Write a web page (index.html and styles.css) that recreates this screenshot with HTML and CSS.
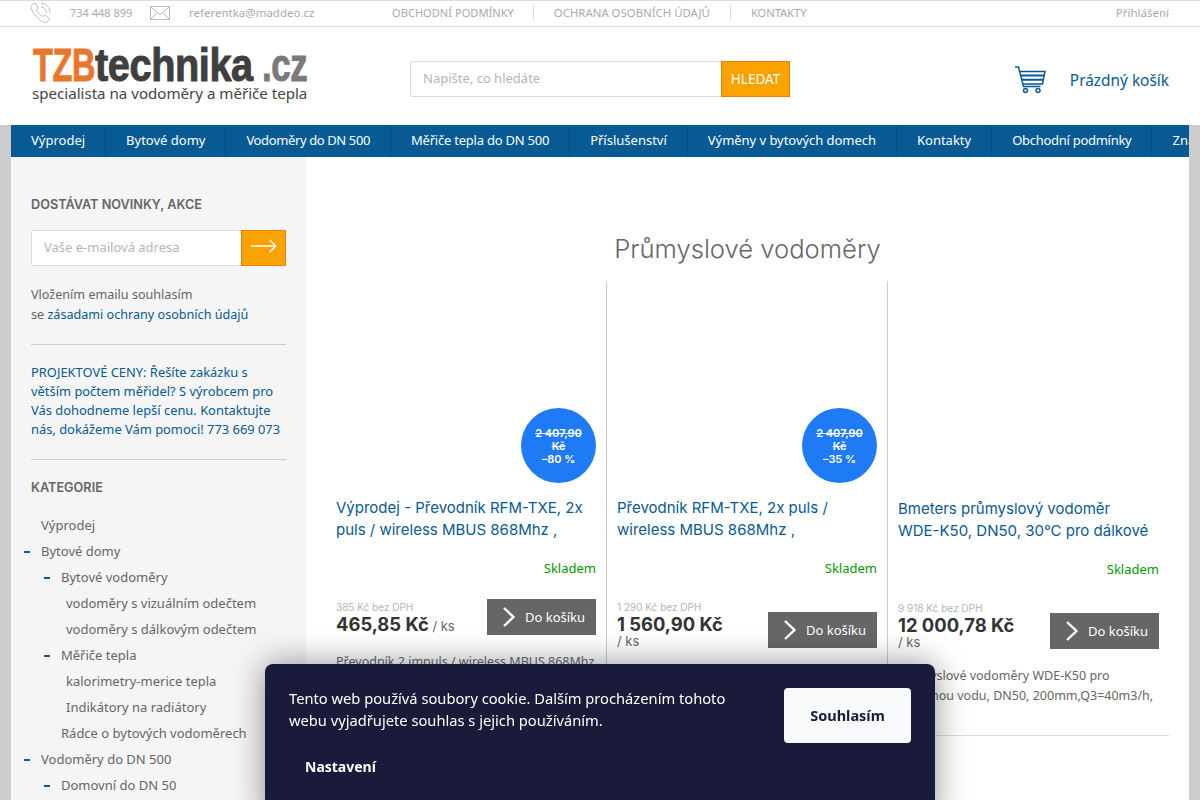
FILE: index.html
```html
<!DOCTYPE html>
<html lang="cs">
<head>
    <meta charset="UTF-8">
    <meta name="viewport" content="width=device-width, initial-scale=1.0">
    <title>TZBtechnika.cz</title>
    <link rel="stylesheet" href="styles.css">
</head>
<body>
    <!-- Top bar -->
    <div class="topbar">
        <div class="contact">
            <svg class="ico-phone" width="22" height="22" viewBox="0 0 22 22" fill="none" stroke="#bbb" stroke-width="1">
                <path d="M2.5 2.5 5 1l3.5 5-2 2c.8 2.2 3.4 5.5 6 6.7l2-1.8 5 3.6-2 3.2c-.8 1-2.4 1.300-4 .6C8 17.500 3.200 12 1.300 6.500.9 5 1.200 3.500 2.500 2.500Z"/>
                <path d="M11 1.500c5 0 9 4 9 9.500M11 5c3 0 5.500 2.500 5.500 6"/>
            </svg>
            <span class="phone-num">734 448 899</span>
            <svg class="ico-mail" width="20" height="14" viewBox="0 0 20 14" fill="none" stroke="#bbb" stroke-width="1">
                <path d="M.5.5h19v13H.5zM.5.5 10 8.500 19.500.5M.5 13.500 7.500 6.500M19.500 13.500l-7-7"/>
            </svg>
            <span class="mail-addr">referentka@maddeo.cz</span>
        </div>
        <ul class="top-links">
            <li>OBCHODNÍ PODMÍNKY</li>
            <li>OCHRANA OSOBNÍCH ÚDAJŮ</li>
            <li>KONTAKTY</li>
        </ul>
        <span class="login">Přihlášení</span>
    </div>

    <!-- Logo, search, cart -->
    <header class="header">
        <div class="logo">
            <div class="logo-mark"><span class="logo-tzb">TZB</span><span class="logo-tech">technika</span><span class="logo-cz">.cz</span></div>
            <div class="logo-sub">specialista na vodoměry a měřiče tepla</div>
        </div>
        <form class="search">
            <input type="text" placeholder="Napište, co hledáte">
            <button type="button">HLEDAT</button>
        </form>
        <div class="cart">
            <svg width="31" height="28" viewBox="0 0 31 28" fill="none" stroke="#075a94" stroke-width="1.500">
                <path d="M0 1h3.500l5 19.500h17"/>
                <path d="M5 5.500h25l-2.500 12.500H8"/>
                <path d="M6 9.500h23M7 13.800h21.500" stroke-width="2"/>
                <circle cx="10.500" cy="24.500" r="2"/>
                <circle cx="23" cy="24.500" r="2"/>
            </svg>
            <span>Prázdný košík</span>
        </div>
    </header>

    <div class="wrap">
        <nav class="nav">
            <a>Výprodej</a>
            <a>Bytové domy</a>
            <a>Vodoměry do DN 500</a>
            <a>Měřiče tepla do DN 500</a>
            <a>Příslušenství</a>
            <a>Výměny v bytových domech</a>
            <a>Kontakty</a>
            <a>Obchodní podmínky</a>
            <a>Znalosti</a>
        </nav>

        <div class="content">
            <aside class="sidebar">
                <h4>DOSTÁVAT NOVINKY, AKCE</h4>
                <form class="news">
                    <input type="text" placeholder="Vaše e-mailová adresa">
                    <button type="button" aria-label="Odeslat">
                        <svg width="26" height="14" viewBox="0 0 26 14" fill="none" stroke="#fff" stroke-width="1.300">
                            <path d="M0 7h25M18.500.7 25 7l-6.500 6.300"/>
                        </svg>
                    </button>
                </form>
                <p class="consent">Vložením emailu souhlasím<br>se <a>zásadami ochrany osobních údajů</a></p>
                <p class="promo">PROJEKTOVÉ CENY: Řešíte zakázku s větším počtem měřidel? S výrobcem pro Vás dohodneme lepší cenu. Kontaktujte nás, dokážeme Vám pomoci! 773 669 073</p>
                <h4 class="cat-title">KATEGORIE</h4>
                <ul class="tree">
                    <li class="l1">Výprodej</li>
                    <li class="l1 open">Bytové domy</li>
                    <li class="l2 open">Bytové vodoměry</li>
                    <li class="l3">vodoměry s vizuálním odečtem</li>
                    <li class="l3">vodoměry s dálkovým odečtem</li>
                    <li class="l2 open">Měřiče tepla</li>
                    <li class="l3">kalorimetry-merice tepla</li>
                    <li class="l3">Indikátory na radiátory</li>
                    <li class="l2">Rádce o bytových vodoměrech</li>
                    <li class="l1 open">Vodoměry do DN 500</li>
                    <li class="l2 open">Domovní do DN 50</li>
                </ul>
            </aside>

            <main class="main">
                <h2>Průmyslové vodoměry</h2>
                <div class="products">
                    <div class="product">
                        <div class="product-img">
                            <div class="badge"><s>2 407,90 Kč</s><br>–80 %</div>
                        </div>
                        <a class="product-name">Výprodej - Převodník RFM-TXE, 2x puls / wireless MBUS 868Mhz ,</a>
                        <div class="stock">Skladem</div>
                        <div class="buy">
                            <div class="prices">
                                <div class="net">385 Kč bez DPH</div>
                                <strong>465,85 Kč</strong> <span class="unit">/ ks</span>
                            </div>
                            <button type="button" class="add"><svg width="14" height="20" viewBox="0 0 14 20" fill="none" stroke="#fff" stroke-width="2.400"><path d="M2 1l9.500 9L2 19"/></svg>Do košíku</button>
                        </div>
                        <p class="desc">Převodník 2 impuls / wireless MBUS 868Mhz</p>
                    </div>
                    <div class="product">
                        <div class="product-img">
                            <div class="badge"><s>2 407,90 Kč</s><br>–35 %</div>
                        </div>
                        <a class="product-name">Převodník RFM-TXE, 2x puls / wireless MBUS 868Mhz ,</a>
                        <div class="stock">Skladem</div>
                        <div class="buy">
                            <div class="prices">
                                <div class="net">1 290 Kč bez DPH</div>
                                <strong>1 560,90 Kč</strong> <span class="unit">/ ks</span>
                            </div>
                            <button type="button" class="add"><svg width="14" height="20" viewBox="0 0 14 20" fill="none" stroke="#fff" stroke-width="2.400"><path d="M2 1l9.500 9L2 19"/></svg>Do košíku</button>
                        </div>
                    </div>
                    <div class="product last">
                        <div class="product-img"></div>
                        <a class="product-name">Bmeters průmyslový vodoměr<br>WDE-K50, DN50, 30°C pro dálkové</a>
                        <div class="stock">Skladem</div>
                        <div class="buy">
                            <div class="prices">
                                <div class="net">9 918 Kč bez DPH</div>
                                <strong>12 000,78 Kč</strong> <span class="unit">/ ks</span>
                            </div>
                            <button type="button" class="add"><svg width="14" height="20" viewBox="0 0 14 20" fill="none" stroke="#fff" stroke-width="2.400"><path d="M2 1l9.500 9L2 19"/></svg>Do košíku</button>
                        </div>
                        <p class="desc">Průmyslové vodoměry WDE-K50 pro studenou vodu, DN50, 200mm,Q3=40m3/h,</p>
                    </div>
                </div>
            </main>
        </div>
    </div>

    <!-- Cookie bar -->
    <div class="cookie">
        <div class="cookie-top">
            <p>Tento web používá soubory cookie. Dalším procházením tohoto webu vyjadřujete souhlas s jejich používáním.</p>
            <button type="button" class="cookie-ok">Souhlasím</button>
        </div>
        <button type="button" class="cookie-set">Nastavení</button>
    </div>
</body>
</html>
```

FILE: styles.css
```css
html, body {
    height: 800px;
    overflow: hidden;
}
body {
    margin: 0;
    background-color: #cdcdcd;
    font-family: "Noto Sans", Arial, sans-serif;
    font-size: 13px;
    color: #666;
}
ul {
    list-style-type: none;
    margin: 0;
    padding: 0;
}
input, button {
    font-family: "Noto Sans", Arial, sans-serif;
}
input::placeholder {
    color: #b5b5b5;
    opacity: 1;
}

/* top bar */
.topbar {
    display: flex;
    align-items: center;
    height: 23px;
    padding: 0 31px 2px 30px;
    background-color: #fff;
    border-top: 1px solid #ddd;
    border-bottom: 1px solid #ddd;
    font-size: 11.1px;
    color: #aaa;
    white-space: nowrap;
}
.contact {
    display: flex;
    align-items: center;
    width: 362px;
}
.ico-phone {
    margin-right: 18px;
}
.phone-num {
    width: 62px;
    margin-right: 18px;
    font-size: 11px;
}
.ico-mail {
    margin-right: 19px;
}
.mail-addr, .login {
    font-size: 11.5px;
}
.top-links {
    display: flex;
    flex: 1;
}
.top-links li {
    padding-right: 20px;
    margin-right: 20px;
    border-right: 1px solid #ddd;
    line-height: 15px;
}
.top-links li:first-child {
    padding-right: 19px;
    margin-right: 20px;
}
.top-links li:nth-child(2) {
    font-size: 11.4px;
}
.top-links li:last-child {
    border-right: none;
}

/* header */
.header {
    display: flex;
    align-items: center;
    height: 92px;
    padding: 6px 31px 0 32px;
    background-color: #fff;
}
.logo {
    align-self: flex-start;
    width: 378px;
    margin-top: 14px;
}
.logo-mark {
    display: flex;
    height: 36px;
    white-space: nowrap;
    font-family: "Liberation Sans", Arial, sans-serif;
    font-size: 47px;
    font-weight: bold;
    line-height: 36px;
    letter-spacing: -0.5px;
}
.logo-mark span {
    flex: none;
    transform-origin: left center;
    -webkit-text-stroke: 1px currentColor;
}
.logo-tzb {
    width: 62px;
    margin-left: 1px;
    color: #e8772e;
    transform: scaleX(0.69);
}
.logo-tech {
    width: 159px;
    color: #3f3f3f;
    transform: scaleX(0.845);
}
.logo-cz {
    margin-left: 8px;
    color: #7a7a7a;
    transform: scaleX(0.74);
}
.logo-sub {
    margin-top: 1px;
    font-size: 15.1px;
    line-height: 18px;
    color: #444;
    white-space: nowrap;
}
.search {
    display: flex;
    width: 380px;
    height: 36px;
}
.search input {
    flex: 1;
    min-width: 0;
    padding: 0 12px 2px;
    border: 1px solid #ddd;
    border-right: none;
    border-radius: 3px 0 0 3px;
    font-size: 13px;
    outline: none;
}
.search button {
    width: 69px;
    padding: 0;
    background-color: #faa200;
    border: 1px solid #e8800a;
    color: #fff;
    font-size: 13.5px;
}
.cart {
    display: flex;
    align-items: center;
    justify-content: space-between;
    margin: 2px 0 0 auto;
    width: 154px;
    font-size: 15.4px;
    color: #075a94;
}

/* wrapper */
.wrap {
    width: 1178px;
    margin: 0 auto;
    background-color: #fff;
}
.nav {
    display: flex;
    height: 32px;
    overflow: hidden;
    background-color: #075a94;
}
.nav a {
    flex: none;
    padding: 0 20px;
    border-right: 1px solid #0a4a78;
    color: #fff;
    line-height: 31px;
}
.nav a:nth-child(3) {
    letter-spacing: -0.38px;
}
.nav a:nth-child(4) {
    letter-spacing: -0.23px;
}
.nav a:nth-child(6) {
    letter-spacing: -0.04px;
}
.nav a:nth-child(8) {
    letter-spacing: -0.28px;
}
.content {
    display: flex;
    height: 643px;
}

/* sidebar */
.sidebar {
    width: 255px;
    padding: 0 20px;
    background-color: #f5f5f5;
}
.sidebar h4 {
    margin: 39px 0 16px;
    font-family: Inter, Arial, sans-serif;
    font-size: 12.7px;
    font-weight: 600;
    line-height: 18px;
    color: #666;
}
.news {
    display: flex;
    height: 36px;
}
.news input {
    flex: 1;
    min-width: 0;
    padding: 0 12px 2px;
    border: 1px solid #ddd;
    border-right: none;
    border-radius: 3px 0 0 3px;
    font-size: 13px;
    outline: none;
}
.news button {
    width: 45px;
    padding: 0;
    background-color: #faa200;
    border: 1px solid #e8800a;
}
.consent {
    margin: 19px 0 0;
    padding-bottom: 19px;
    border-bottom: 1px solid #ccc;
    font-size: 12.6px;
    line-height: 20px;
}
.consent a, .promo {
    color: #075a94;
}
.promo {
    margin: 0;
    padding: 18px 0 20px;
    border-bottom: 1px solid #ccc;
    font-size: 12.9px;
    line-height: 19px;
}
.sidebar .cat-title {
    margin: 19px 0 15px;
}
.tree {
    margin-left: -20px;
}
.tree li {
    position: relative;
    height: 26px;
    line-height: 26px;
    white-space: nowrap;
}
.l1 {
    padding-left: 30px;
}
.l2 {
    padding-left: 50px;
}
.l3 {
    padding-left: 55px;
}
.open::before {
    content: "";
    position: absolute;
    top: 13px;
    width: 6px;
    height: 2px;
    background-color: #075a94;
}
.l1.open::before {
    left: 13px;
}
.l2.open::before {
    left: 33px;
}

/* products */
.main {
    flex: 1;
    padding: 0 20px;
}
.main h2 {
    height: 48px;
    margin: 0;
    padding-top: 76px;
    font-family: Inter, Arial, sans-serif;
    font-size: 25.6px;
    font-weight: 300;
    line-height: 32px;
    text-align: center;
    color: #666;
}
.products {
    display: grid;
    grid-template-columns: 281px 281px 281px;
    height: 454px;
    border-bottom: 1px solid #ddd;
}
.product {
    padding: 0 10px;
    border-right: 1px solid #ccc;
}
.product.last {
    padding-top: 1px;
    border-right: none;
}
.product-img {
    position: relative;
    height: 202px;
}
.badge {
    position: absolute;
    right: 0;
    bottom: 0;
    width: 75px;
    height: 75px;
    box-sizing: border-box;
    padding: 19px 8px 0;
    border-radius: 50%;
    background-color: #1f7af5;
    color: #fff;
    font-family: Inter, Arial, sans-serif;
    font-size: 11px;
    font-weight: 600;
    line-height: 13px;
    text-align: center;
}
.product-name {
    display: block;
    height: 44px;
    margin-top: 14px;
    overflow: hidden;
    font-family: Inter, Arial, sans-serif;
    font-size: 15px;
    line-height: 22px;
    color: #075a94;
}
.stock {
    margin-top: 18px;
    line-height: 18px;
    text-align: right;
    color: #009901;
}
.buy {
    display: flex;
    align-items: flex-end;
    justify-content: space-between;
    margin-top: 22px;
}
.net {
    margin-bottom: 1px;
    font-size: 10px;
    line-height: 12px;
    color: #b5b5b5;
}
.prices {
    max-width: 125px;
    padding-top: 2px;
    font-family: Inter, Arial, sans-serif;
    line-height: 13px;
}
.prices strong {
    font-size: 18.4px;
    color: #333;
    line-height: 21px;
}
.unit {
    color: #666;
    font-size: 13px;
    white-space: nowrap;
}
.add {
    display: flex;
    flex: none;
    align-items: center;
    gap: 9px;
    width: 109px;
    height: 36px;
    padding: 0 0 0 15px;
    background-color: #666;
    border: none;
    color: #fff;
    font-size: 13px;
}
.desc {
    margin: 17px 0 0;
    font-size: 12.5px;
    line-height: 20px;
}

/* cookie bar */
.cookie {
    position: fixed;
    left: 265px;
    bottom: -20px;
    width: 670px;
    height: 156px;
    box-sizing: border-box;
    padding: 24px;
    background-color: #1a1a3a;
    border-radius: 8px;
    box-shadow: 0 0 32px rgba(10, 10, 25, 0.45);
    color: #fff;
}
.cookie-top {
    display: flex;
    align-items: flex-start;
    justify-content: space-between;
}
.cookie-top p {
    width: 450px;
    margin: -1px 0 0;
    font-size: 14.7px;
    line-height: 22px;
}
.cookie-ok {
    width: 127px;
    height: 55px;
    padding-bottom: 3px;
    background-color: #f8f9fb;
    border: none;
    border-radius: 4px;
    color: #1a1a3a;
    font-size: 14.5px;
    font-weight: bold;
}
.cookie-set {
    display: block;
    margin: 14px 0 0 16px;
    padding: 0;
    background: none;
    border: none;
    color: #fff;
    font-size: 14px;
    font-weight: bold;
}
```
